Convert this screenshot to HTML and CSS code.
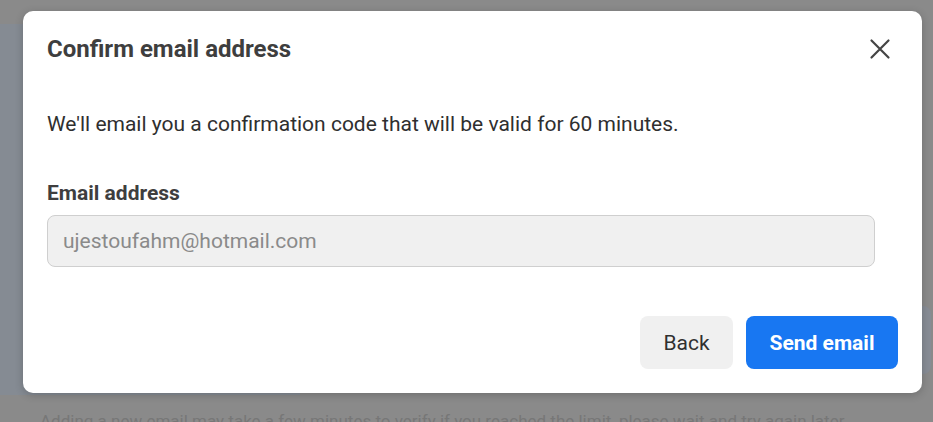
FILE: index.html
```html
<!DOCTYPE html>
<html lang="en">
<head>
<meta charset="utf-8">
<title>Confirm email address</title>
<link rel="stylesheet" href="styles.css">
</head>
<body>
<div class="backdrop">
  <div class="topbar"></div>
  <div class="main">
    <div class="sidebar"></div>
    <div class="content">
      <div class="ghost-btn"></div>
    </div>
  </div>
  <p class="under-text">Adding a new email may take a few minutes to verify if you reached the limit, please wait and try again later.</p>
</div>

<div class="modal" role="dialog" aria-labelledby="dlg-title">
  <div class="modal-header">
    <h2 id="dlg-title" class="modal-title">Confirm email address</h2>
    <button class="close-btn" aria-label="Close">
      <svg width="24" height="24" viewBox="0 0 24 24" aria-hidden="true">
        <path d="M3.5 3.5 L20.5 20.5 M20.5 3.5 L3.5 20.5" stroke="#444" stroke-width="2.2" stroke-linecap="round" fill="none"/>
      </svg>
    </button>
  </div>
  <p class="modal-text">We'll email you a confirmation code that will be valid for 60 minutes.</p>
  <label class="field-label" for="email">Email address</label>
  <div class="field-input" id="email">ujestoufahm@hotmail.com</div>
  <div class="modal-actions">
    <button class="btn btn-secondary">Back</button>
    <button class="btn btn-primary">Send email</button>
  </div>
</div>
</body>
</html>
```
FILE: styles.css
```css
* { box-sizing: border-box; }

html, body {
  margin: 0;
  padding: 0;
}

body {
  width: 933px;
  height: 422px;
  overflow: hidden;
  background: #8a8a8a;
  font-family: Roboto, "Liberation Sans", Arial, sans-serif;
  position: relative;
}

.backdrop {
  display: flex;
  flex-direction: column;
  height: 422px;
}

.topbar {
  height: 24px;
  background: #8a8a8a;
  flex: none;
}

.main {
  display: flex;
  height: 371px;
  flex: none;
}

.sidebar {
  width: 300px;
  background: #858b93;
}

.content {
  flex: 1;
  display: flex;
  justify-content: flex-end;
  align-items: flex-start;
  padding-top: 282px;
}

.ghost-btn {
  width: 60px;
  height: 68px;
  margin-right: 2px;
  border-radius: 8px;
  background: #878c95;
}

.under-text {
  margin: 0;
  padding: 16px 0 0 40px;
  color: #777777;
  font-size: 17px;
  line-height: 20px;
  white-space: nowrap;
}

.modal {
  position: absolute;
  left: 23px;
  top: 11px;
  width: 899px;
  height: 382px;
  background: #ffffff;
  border-radius: 10px;
  box-shadow: 0 2px 8px rgba(0, 0, 0, 0.2);
  padding: 0 24px 0 24px;
  display: flex;
  flex-direction: column;
}

.modal-header {
  display: flex;
  align-items: center;
  justify-content: space-between;
  height: 76px;
  flex: none;
}

.modal-title {
  margin: 0;
  font-size: 24px;
  line-height: 30px;
  font-weight: 700;
  color: #3e3e3e;
}

.close-btn {
  width: 24px;
  height: 24px;
  padding: 0;
  margin-right: 6px;
  border: none;
  background: none;
  display: flex;
  align-items: center;
  justify-content: center;
}

.modal-text {
  margin: 24px 0 0 0;
  font-size: 21px;
  line-height: 26px;
  color: #2f2f2f;
}

.field-label {
  margin-top: 43px;
  font-size: 21px;
  line-height: 26px;
  font-weight: 700;
  color: #3e3e3e;
}

.field-input {
  margin-top: 9px;
  width: 828px;
  height: 52px;
  flex: none;
  background: #f0f0f0;
  border: 1px solid #cfcfcf;
  border-radius: 8px;
  padding: 0 15px;
  display: flex;
  align-items: center;
  font-size: 21px;
  color: #8a8a8a;
}

.modal-actions {
  display: flex;
  justify-content: flex-end;
  gap: 13px;
  margin-top: 49px;
}

.btn {
  height: 53px;
  border: none;
  border-radius: 8px;
  font-family: Roboto, "Liberation Sans", Arial, sans-serif;
  font-size: 21px;
  padding: 0;
}

.btn-secondary {
  width: 93px;
  background: #f0f0f0;
  color: #303030;
  font-weight: 400;
}

.btn-primary {
  width: 152px;
  background: #1877f2;
  color: #ffffff;
  font-weight: 700;
}
```
